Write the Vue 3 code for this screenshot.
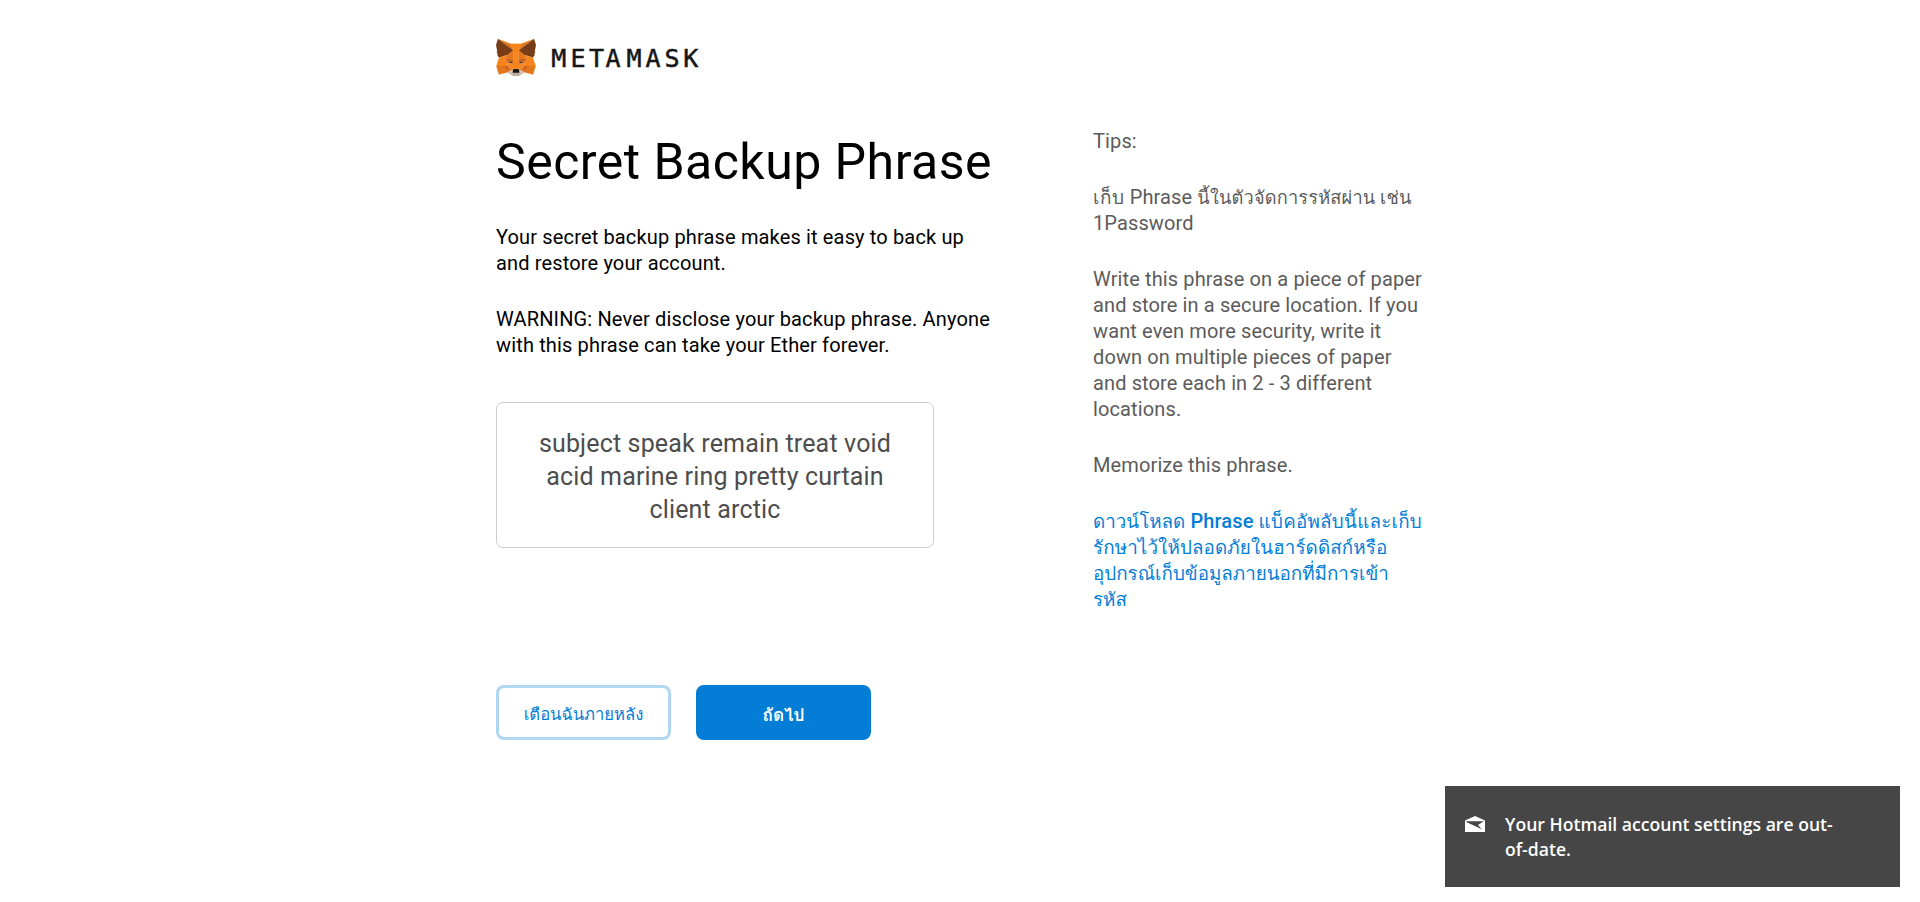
<script setup>
const fox = [
  ['#e2761b', '274.1,35.5 174.6,109.4 193,65.8'],
  ['#e4761b', '44.4,35.5 143.1,110.1 125.6,65.8'],
  ['#e4761b', '238.3,206.8 211.8,247.4 268.5,263 284.8,207.7'],
  ['#e4761b', '33.9,207.7 50.1,263 106.8,247.4 80.3,206.8'],
  ['#e4761b', '103.6,138.2 87.8,162.1 144.1,164.6 142.1,104.1'],
  ['#e4761b', '214.9,138.2 175.9,103.4 174.6,164.6 230.8,162.1'],
  ['#e4761b', '106.8,247.4 140.6,230.9 111.4,208.1'],
  ['#e4761b', '177.9,230.9 211.8,247.4 207.1,208.1'],
  ['#d7c1b3', '211.8,247.4 177.9,230.9 180.6,253 180.3,262.3'],
  ['#d7c1b3', '106.8,247.4 138.3,262.3 138.1,253 140.6,230.9'],
  ['#233447', '138.8,193.5 110.6,185.2 130.5,176.1'],
  ['#233447', '179.7,193.5 188,176.1 208,185.2'],
  ['#cd6116', '106.8,247.4 111.6,206.8 80.3,207.7'],
  ['#cd6116', '207,206.8 211.8,247.4 238.3,207.7'],
  ['#cd6116', '230.8,162.1 174.6,164.6 179.8,193.5 188.1,176.1 208.1,185.2'],
  ['#cd6116', '110.6,185.2 130.6,176.1 138.8,193.5 144.1,164.6 87.8,162.1'],
  ['#e4751f', '87.8,162.1 111.4,208.1 110.6,185.2'],
  ['#e4751f', '208.1,185.2 207.1,208.1 230.8,162.1'],
  ['#e4751f', '144.1,164.6 138.8,193.5 145.4,227.6 146.9,182.7'],
  ['#e4751f', '174.6,164.6 171.9,182.6 173.1,227.6 179.8,193.5'],
  ['#f6851b', '179.8,193.5 173.1,227.6 177.9,230.9 207.1,208.1 208.1,185.2'],
  ['#f6851b', '110.6,185.2 111.4,208.1 140.6,230.9 145.4,227.6 138.8,193.5'],
  ['#c0ad9e', '180.3,262.3 180.6,253 178.1,250.8 140.4,250.8 138.1,253 138.3,262.3 106.8,247.4 117.8,256.4 140.1,271.9 178.4,271.9 200.8,256.4 211.8,247.4'],
  ['#161616', '177.9,230.9 173.1,227.6 145.4,227.6 140.6,230.9 138.1,253 140.4,250.8 178.1,250.8 180.6,253'],
  ['#763d16', '278.3,114.2 286.8,73.4 274.1,35.5 177.9,106.9 214.9,138.2 267.2,153.5 278.8,140 273.8,136.4 281.8,129.1 275.6,124.3 283.6,118.2'],
  ['#763d16', '31.8,73.4 40.3,114.2 34.9,118.2 42.9,124.3 36.8,129.1 44.8,136.4 39.8,140 51.3,153.5 103.6,138.2 140.6,106.9 44.4,35.5'],
  ['#f6851b', '267.2,153.5 214.9,138.2 230.8,162.1 207.1,208.1 238.3,207.7 284.8,207.7'],
  ['#f6851b', '103.6,138.2 51.3,153.5 33.9,207.7 80.3,207.7 111.4,208.1 87.8,162.1'],
  ['#f6851b', '174.6,164.6 177.9,106.9 193.1,65.8 125.6,65.8 140.6,106.9 144.1,164.6 145.3,182.8 145.4,227.6 173.1,227.6 173.3,182.8'],
]
</script>

<template>
  <div class="page">
    <header class="brand">
      <svg class="fox" viewBox="31.8 35.5 255 236.4">
        <polygon v-for="(p, i) in fox" :key="i" :fill="p[0]" :stroke="p[0]" stroke-linejoin="round" :points="p[1]" />
      </svg>
      <svg class="wordmark" width="152" height="30" viewBox="0 0 152 30">
        <text x="0.2 19.6 38 54.6 75.4 94.6 113.5 132.3" y="24.2">METAMASK</text>
      </svg>
    </header>

    <main class="columns">
      <section class="main">
        <h1>Secret Backup Phrase</h1>
        <p>Your secret backup phrase makes it easy to back up<br>and restore your account.</p>
        <p>WARNING: Never disclose your backup phrase. Anyone<br>with this phrase can take your Ether forever.</p>
        <div class="phrase">subject speak remain treat void<br>acid marine ring pretty curtain<br>client arctic</div>
        <div class="actions">
          <button class="btn later">เตือนฉันภายหลัง</button>
          <button class="btn next">ถัดไป</button>
        </div>
      </section>

      <aside class="tips">
        <p>Tips:</p>
        <p><span class="th lead">เก็บ</span> Phrase <span class="th manager">นี้ในตัวจัดการรหัสผ่าน เช่น</span><br>1Password</p>
        <p>Write this phrase on a piece of paper<br>and store in a secure location. If you<br>want even more security, write it<br>down on multiple pieces of paper<br>and store each in 2 - 3 different<br>locations.</p>
        <p>Memorize this phrase.</p>
        <p class="link"><span class="th">ดาวน์โหลด</span> <b>Phrase</b> <span class="th wide">แบ็คอัพลับนี้และเก็บ</span><br><span class="th airy">รักษาไว้ให้ปลอดภัยในฮาร์ดดิสก์หรือ</span><br><span class="th">อุปกรณ์เก็บข้อมูลภายนอกที่มีการเข้า</span><br><span class="th">รหัส</span></p>
      </aside>
    </main>

    <div class="toast">
      <svg class="mail" width="20" height="16" viewBox="0 0 20 16">
        <path fill="#fff" d="M0 4.6 10 0 20 4.6V16H0z" />
        <path fill="#464646" d="M1.2 5.2H18.8L13 8.9 16.8 13.2 1.2 6z" />
      </svg>
      <div class="message">Your Hotmail account settings are out-<br>of-date.</div>
    </div>
  </div>
</template>

<style scoped>
.page {
  height: 902px;
  box-sizing: border-box;
  padding: 39px 0 0 496px;
  overflow: hidden;
  position: relative;
  background: #fff;
  color: #000;
  font: 20px/26px Roboto, Loma, sans-serif;
  white-space: nowrap;
}
.brand { display: flex; height: 38px; align-items: flex-start; gap: 15px; }
.fox { width: 40px; height: 37px; display: block; }
.wordmark { margin-top: 4px; display: block; overflow: visible; }
.wordmark text {
  font: 25px "DejaVu Sans Mono", monospace;
  fill: #161616;
  stroke: #161616;
  stroke-width: 0.5px;
}
.columns { display: grid; grid-template-columns: 597px 340px; align-items: start; padding-top: 51px; }
.main { padding-top: 4px; letter-spacing: 0.15px; }
h1 { margin: 0 0 32px; font-size: 50px; line-height: 60px; font-weight: 400; letter-spacing: 0.47px; }
p { margin: 0 0 30px; }
.phrase {
  box-sizing: border-box;
  width: 438px;
  height: 146px;
  margin-top: 44px;
  padding-top: 24px;
  border: 1px solid #cdcdcd;
  border-radius: 7px;
  text-align: center;
  font-size: 25px;
  line-height: 33px;
  letter-spacing: 0.16px;
  color: #4d4d4d;
}
.actions { display: flex; gap: 25px; margin-top: 137px; }
.btn {
  box-sizing: border-box;
  width: 175px;
  height: 55px;
  padding: 5px 0 0;
  border: 3px solid #b0d7f2;
  border-radius: 8px;
  background: #fff;
  color: #037dd6;
  font: 16.6px/24px Roboto, Loma, sans-serif;
}
.next { border-color: #037dd6; background: #037dd6; color: #fff; font-weight: 700; font-size: 17.2px; }
.tips { color: #5b5b5b; letter-spacing: 0.12px; }
.th { font-size: 18.2px; line-height: 0; letter-spacing: 0; }
.lead { font-size: 19px; letter-spacing: 0.5px; }
.manager { letter-spacing: 0.17px; }
.link { color: #037dd6; }
.link b { font-weight: 500; }
.link .th { font-size: 18.8px; }
.link .wide { letter-spacing: 0.25px; }
.link .airy { letter-spacing: 0.12px; }
.toast {
  position: absolute;
  left: 1445px;
  top: 786px;
  box-sizing: border-box;
  width: 455px;
  height: 101px;
  padding: 26px 20px 0;
  display: flex;
  gap: 20px;
  background: #464646;
  color: #fff;
  font: 600 17.6px/25px "Open Sans", sans-serif;
}
.mail { margin-top: 4px; flex: none; }
</style>
